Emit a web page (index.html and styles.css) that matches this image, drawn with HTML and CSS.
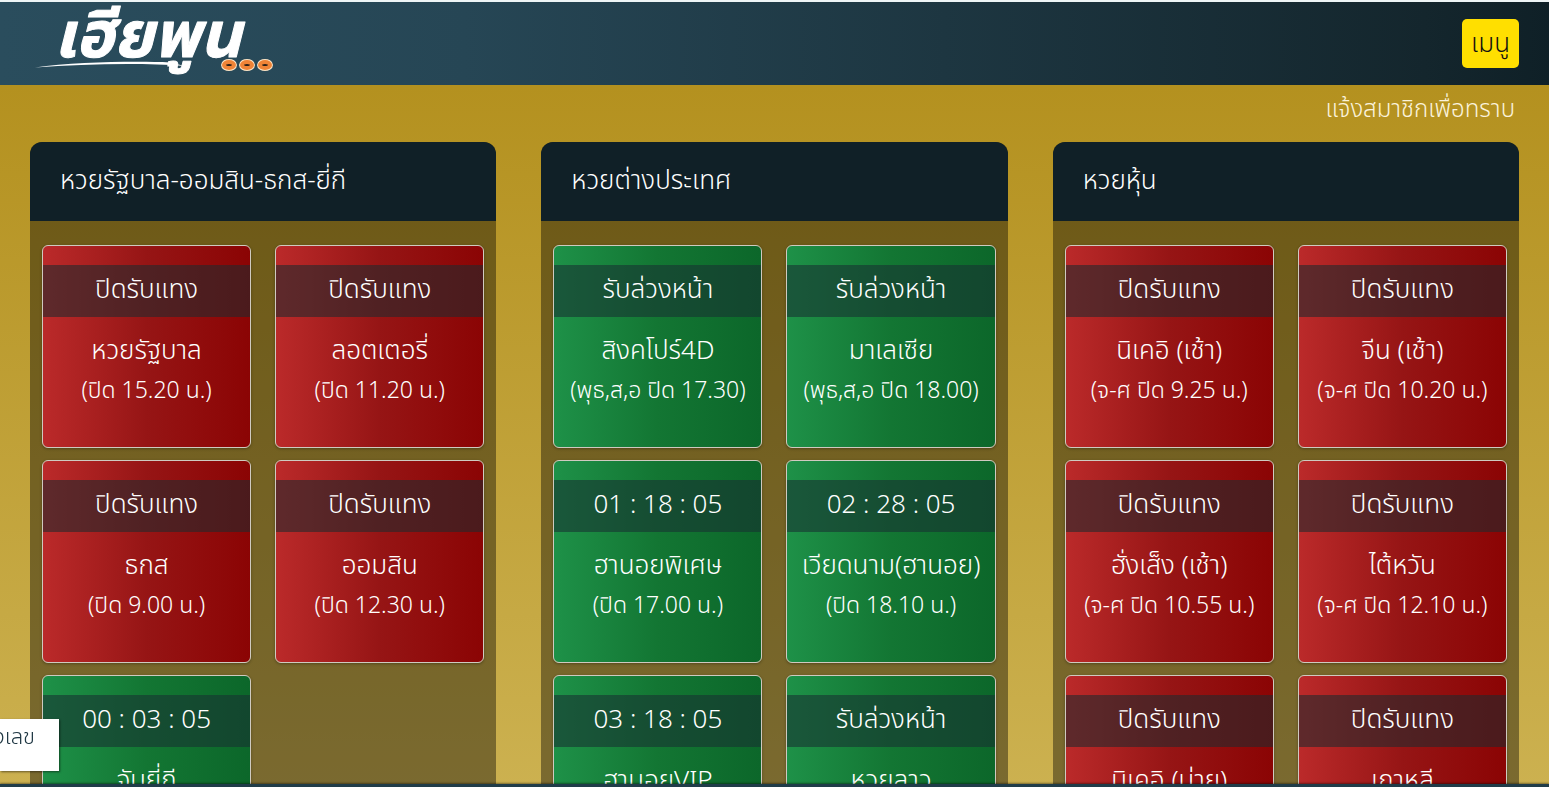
FILE: index.html
```html
<!DOCTYPE html>
<html lang="th">
<head>
<meta charset="utf-8">
<title>เฮียพูน</title>
<link rel="stylesheet" href="styles.css">
</head>
<body>
<header class="topbar">
  <a class="logo" href="#" aria-label="เฮียพูน">
    <svg width="246" height="66" viewBox="0 0 246 66">
      <text class="logo-text" x="24" y="46" font-size="64">เฮียพูน</text>
      <path d="M5 56.500C45 51 105 50 140 51.500L155 55C110 51.500 55 53 5 56.500Z" fill="#fff"/>
      <g fill="#2a2018" stroke="#fbe3c4" stroke-width="6">
        <ellipse cx="199" cy="54" rx="5" ry="3"/>
        <ellipse cx="217" cy="54" rx="5" ry="3"/>
        <ellipse cx="235" cy="54" rx="5" ry="3"/>
      </g>
      <g fill="#2a2018" stroke="#f08437" stroke-width="4">
        <ellipse cx="199" cy="54" rx="5" ry="3"/>
        <ellipse cx="217" cy="54" rx="5" ry="3"/>
        <ellipse cx="235" cy="54" rx="5" ry="3"/>
      </g>
    </svg>
  </a>
  <button class="menu" type="button">เมนู</button>
</header>
<p class="notice">แจ้งสมาชิกเพื่อทราบ</p>
<main class="columns">
  <section class="panel">
    <h2 class="panel-title">หวยรัฐบาล-ออมสิน-ธกส-ยี่กี</h2>
    <div class="cards">
      <a class="card closed" href="#"><span class="status">ปิดรับแทง</span><span class="name">หวยรัฐบาล</span><span class="time">(ปิด 15.20 น.)</span></a>
      <a class="card closed" href="#"><span class="status">ปิดรับแทง</span><span class="name">ลอตเตอรี่</span><span class="time">(ปิด 11.20 น.)</span></a>
      <a class="card closed" href="#"><span class="status">ปิดรับแทง</span><span class="name">ธกส</span><span class="time">(ปิด 9.00 น.)</span></a>
      <a class="card closed" href="#"><span class="status">ปิดรับแทง</span><span class="name">ออมสิน</span><span class="time">(ปิด 12.30 น.)</span></a>
      <a class="card open" href="#"><span class="status">00 : 03 : 05</span><span class="name">จับยี่กี</span></a>
    </div>
  </section>
  <section class="panel">
    <h2 class="panel-title">หวยต่างประเทศ</h2>
    <div class="cards">
      <a class="card open" href="#"><span class="status">รับล่วงหน้า</span><span class="name">สิงคโปร์4D</span><span class="time">(พุธ,ส,อ ปิด 17.30)</span></a>
      <a class="card open" href="#"><span class="status">รับล่วงหน้า</span><span class="name">มาเลเซีย</span><span class="time">(พุธ,ส,อ ปิด 18.00)</span></a>
      <a class="card open" href="#"><span class="status">01 : 18 : 05</span><span class="name">ฮานอยพิเศษ</span><span class="time">(ปิด 17.00 น.)</span></a>
      <a class="card open" href="#"><span class="status">02 : 28 : 05</span><span class="name">เวียดนาม(ฮานอย)</span><span class="time">(ปิด 18.10 น.)</span></a>
      <a class="card open" href="#"><span class="status">03 : 18 : 05</span><span class="name">ฮานอยVIP</span></a>
      <a class="card open" href="#"><span class="status">รับล่วงหน้า</span><span class="name">หวยลาว</span></a>
    </div>
  </section>
  <section class="panel">
    <h2 class="panel-title">หวยหุ้น</h2>
    <div class="cards">
      <a class="card closed" href="#"><span class="status">ปิดรับแทง</span><span class="name">นิเคอิ (เช้า)</span><span class="time">(จ-ศ ปิด 9.25 น.)</span></a>
      <a class="card closed" href="#"><span class="status">ปิดรับแทง</span><span class="name">จีน (เช้า)</span><span class="time">(จ-ศ ปิด 10.20 น.)</span></a>
      <a class="card closed" href="#"><span class="status">ปิดรับแทง</span><span class="name">ฮั่งเส็ง (เช้า)</span><span class="time">(จ-ศ ปิด 10.55 น.)</span></a>
      <a class="card closed" href="#"><span class="status">ปิดรับแทง</span><span class="name">ไต้หวัน</span><span class="time">(จ-ศ ปิด 12.10 น.)</span></a>
      <a class="card closed" href="#"><span class="status">ปิดรับแทง</span><span class="name">นิเคอิ (บ่าย)</span></a>
      <a class="card closed" href="#"><span class="status">ปิดรับแทง</span><span class="name">เกาหลี</span></a>
    </div>
  </section>
</main>
<div class="side-tip">ยงเลข</div>
<footer class="bottom-line"></footer>
</body>
</html>
```

FILE: styles.css
```css
* { box-sizing: border-box; }
body {
  margin: 0;
  height: 100vh;
  overflow: hidden;
  display: flex;
  flex-direction: column;
  font-family: "Noto Sans Thai", Roboto, "Noto Sans", sans-serif;
  font-weight: 300;
  color: #fff;
  background: linear-gradient(#b18d19, #ccb150);
}
.topbar {
  flex: none;
  display: flex;
  justify-content: space-between;
  align-items: center;
  height: 85px;
  padding: 0 30px;
  border-top: 2px solid #eef5f6;
  background: linear-gradient(90deg, #2a4d5d, #264655 30%, #14262d 92%, #0f2027);
}
.logo { display: block; }
.logo svg { display: block; overflow: visible; }
.logo-text {
  fill: #fff;
  stroke: #fff;
  stroke-width: 1px;
  stroke-linejoin: round;
  font-weight: 700;
  font-style: italic;
}
.menu {
  height: 49px;
  padding: 0 9px;
  border: 0;
  border-radius: 5px;
  background: #ffdf00;
  color: #111;
  font: inherit;
  font-size: 26px;
}
.notice {
  flex: none;
  margin: 0;
  padding: 0 34px;
  height: 57px;
  line-height: 50px;
  font-size: 24px;
  text-align: right;
  color: #fbf3dc;
}
.columns {
  flex: 1;
  min-height: 0;
  display: grid;
  grid-template-columns: repeat(3, minmax(0, 1fr));
  gap: 45px;
  padding: 0 30px;
}
.panel {
  border-radius: 12px 12px 0 0;
  overflow: hidden;
  background: rgba(0, 0, 0, .4);
}
.panel-title {
  margin: 0;
  padding: 0 30px;
  height: 79px;
  line-height: 79px;
  font-size: 26px;
  font-weight: 300;
  white-space: nowrap;
  background: #102027;
}
.cards {
  display: grid;
  grid-template-columns: repeat(2, minmax(0, 1fr));
  gap: 12px 24px;
  padding: 24px 12px;
}
.card {
  height: 203px;
  padding-top: 19px;
  border: 1px solid #cfcac0;
  border-radius: 6px;
  display: flex;
  flex-direction: column;
  color: #fff;
  text-align: center;
  text-decoration: none;
  white-space: nowrap;
  box-shadow: 0 1px 3px rgba(0, 0, 0, .3);
}
.closed { background: linear-gradient(90deg, #bb2a2a, #961515 50%, #8b0404); }
.open { background: linear-gradient(90deg, #1e9148, #137633 50%, #0c672a); }
.status {
  height: 52px;
  line-height: 50px;
  font-size: 26px;
  background: rgba(34, 42, 45, .6);
}
.open .status { background: rgba(24, 50, 50, .6); }
.name {
  height: 52px;
  line-height: 68px;
  font-size: 26px;
}
.time {
  line-height: 44px;
  font-size: 23px;
}
.side-tip {
  position: fixed;
  left: 0;
  bottom: 16px;
  width: 59px;
  height: 52px;
  padding-right: 24px;
  display: flex;
  justify-content: flex-end;
  overflow: hidden;
  line-height: 38px;
  font-size: 22px;
  white-space: nowrap;
  color: #203844;
  background: #fff;
  box-shadow: 1px 1px 2px rgba(0, 0, 0, .5);
}
.bottom-line {
  position: fixed;
  left: 0;
  right: 0;
  bottom: 0;
  height: 3px;
  background: #203c49;
  box-shadow: 0 -1px 2px rgba(0, 0, 0, .4);
}
```
